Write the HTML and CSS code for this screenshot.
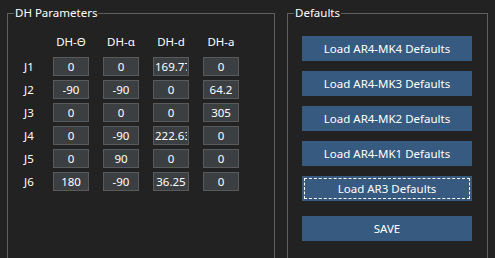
FILE: index.html
```html
<!DOCTYPE html>
<html>
<head>
<meta charset="utf-8">
<link rel="stylesheet" href="styles.css">
</head>
<body>
<div class="app">
  <fieldset class="group dh">
    <legend>DH Parameters</legend>
    <div class="grid">
      <span></span>
      <span class="head">DH-Θ</span>
      <span class="head">DH-α</span>
      <span class="head">DH-d</span>
      <span class="head">DH-a</span>

      <span class="joint">J1</span>
      <input class="cell" value="0"><input class="cell" value="0"><input class="cell" value="169.77"><input class="cell" value="0">
      <span class="joint">J2</span>
      <input class="cell" value="-90"><input class="cell" value="-90"><input class="cell" value="0"><input class="cell" value="64.2">
      <span class="joint">J3</span>
      <input class="cell" value="0"><input class="cell" value="0"><input class="cell" value="0"><input class="cell" value="305">
      <span class="joint">J4</span>
      <input class="cell" value="0"><input class="cell" value="-90"><input class="cell" value="222.63"><input class="cell" value="0">
      <span class="joint">J5</span>
      <input class="cell" value="0"><input class="cell" value="90"><input class="cell" value="0"><input class="cell" value="0">
      <span class="joint">J6</span>
      <input class="cell" value="180"><input class="cell" value="-90"><input class="cell" value="36.25"><input class="cell" value="0">
    </div>
  </fieldset>
  <fieldset class="group defaults">
    <legend>Defaults</legend>
    <div class="buttons">
      <button class="btn">Load AR4-MK4 Defaults</button>
      <button class="btn">Load AR4-MK3 Defaults</button>
      <button class="btn">Load AR4-MK2 Defaults</button>
      <button class="btn">Load AR4-MK1 Defaults</button>
      <button class="btn focused">Load AR3 Defaults</button>
      <button class="btn save">SAVE</button>
    </div>
  </fieldset>
</div>
</body>
</html>
```

FILE: styles.css
```css
* { box-sizing: border-box; }
html, body {
  margin: 0;
  padding: 0;
  background: #222222;
  width: 495px;
  height: 258px;
  overflow: hidden;
}
body {
  font-family: "Noto Sans", "Open Sans", sans-serif;
  font-size: 11.5px;
  color: #ffffff;
}
.app {
  display: flex;
  padding: 5px 0 0 7px;
  gap: 12px;
}
.group {
  margin: 0;
  border: 1px solid #5f5f5f;
  height: 254px;
  padding: 0;
  min-width: 0;
}
.group legend {
  padding: 0 1px;
  margin-left: 6px;
  line-height: 16px;
  color: #ffffff;
}
.dh { width: 268px; }
.defaults { width: 201px; }

.grid {
  display: grid;
  grid-template-columns: 15px repeat(4, 36px);
  column-gap: 14px;
  grid-auto-rows: 19px;
  row-gap: 4px;
  padding: 13px 0 0 16px;
}
.head {
  text-align: center;
  line-height: 19px;
  margin-top: -2px;
}
.joint {
  line-height: 19px;
}
.cell {
  width: 36px;
  height: 19px;
  margin: 0;
  padding: 0 1px;
  border: 1px solid #5a5a5a;
  background: #3c3f42;
  color: #ffffff;
  font: inherit;
  text-align: center;
  outline: none;
}

.buttons {
  display: flex;
  flex-direction: column;
  gap: 10px;
  padding: 15px 0 0 14px;
}
.btn {
  width: 170px;
  height: 25px;
  margin: 0;
  padding: 0;
  border: none;
  background: #375a80;
  color: #ffffff;
  font: inherit;
  position: relative;
}
.focused::after {
  content: "";
  position: absolute;
  left: 2px; top: 2px; right: 2px; bottom: 2px;
  border: 1px dashed #ffffff;
}
.save { margin-top: 5px; }
```
